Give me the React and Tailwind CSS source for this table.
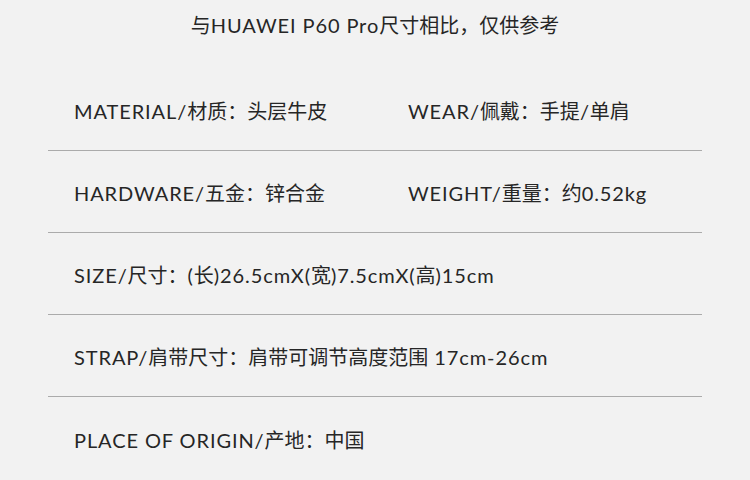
const font = { fontFamily: "Lato, 'Noto Sans CJK SC', sans-serif" };

const rows = [
  ["MATERIAL/材质：头层牛皮", "WEAR/佩戴：手提/单肩"],
  ["HARDWARE/五金：锌合金", "WEIGHT/重量：约0.52kg"],
  ["SIZE/尺寸：(长)26.5cmX(宽)7.5cmX(高)15cm"],
  ["STRAP/肩带尺寸：肩带可调节高度范围 17cm-26cm"],
  ["PLACE OF ORIGIN/产地：中国"],
];

// latin runs get a little tracking so they sit as wide as the original typeface
const Mixed = ({ text }) =>
  text.split(/([\u4e00-\u9fff\uff00-\uffef]+)/).map((part, i) =>
    /[\u4e00-\u9fff\uff00-\uffef]/.test(part) ? (
      <span key={i}>{part}</span>
    ) : (
      <span key={i} className="tracking-[0.9px]">{part}</span>
    )
  );

export default function App() {
  return (
    <div className="w-[750px] h-[480px] bg-[#f2f2f2] text-[#262626] overflow-hidden" style={font}>
      <div className="h-[69px] flex justify-center pt-[12px]">
        <p className="text-[20px] leading-[26px]">
          <Mixed text="与HUAWEI P60 Pro尺寸相比，仅供参考" />
        </p>
      </div>
      <div className="mx-[48px]">
        {rows.map((row, i) => (
          <div
            key={i}
            className={`h-[82px] flex items-center pl-[26px] pt-[3px] ${
              i < rows.length - 1 ? "border-b border-[#ababab]" : ""
            }`}
          >
            <span className="w-[334px] text-[20px] whitespace-nowrap">
              <Mixed text={row[0]} />
            </span>
            {row[1] && (
              <span className="text-[20px] whitespace-nowrap">
                <Mixed text={row[1]} />
              </span>
            )}
          </div>
        ))}
      </div>
    </div>
  );
}
